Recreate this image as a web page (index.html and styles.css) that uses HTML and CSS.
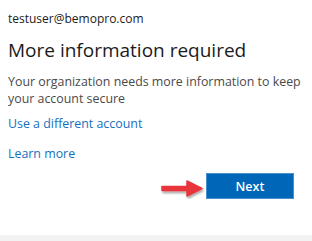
FILE: index.html
```html
<!DOCTYPE html>
<html lang="en">
<head>
   <meta charset="UTF-8">
   <title>More information required</title>
   <link rel="stylesheet" href="styles.css">
</head>
<body>
   <div class="signin-box">
       <div class="identity">testuser@bemopro.com</div>
       <h1 class="title">More information required</h1>
       <p class="description">Your organization needs more information to keep your account secure</p>
       <a class="link link-account" href="#">Use a different account</a>
       <a class="link link-learn" href="#">Learn more</a>

       <div class="actions">
           <svg class="arrow" width="46" height="20" viewBox="0 0 46 20">
               <defs>
                   <filter id="shadow" x="-20%" y="-40%" width="140%" height="180%">
                       <feDropShadow dx="1" dy="2" stdDeviation="1" flood-color="#000" flood-opacity="0.35"/>
                   </filter>
               </defs>
               <g filter="url(#shadow)">
                   <path d="M3 7.5 H28 V2 L43 9.5 L28 17 V11.5 H3 Z" fill="#e8363b" stroke="#e8363b" stroke-linejoin="round" stroke-width="1.5"/>
               </g>
           </svg>
           <button class="next-button" type="button">Next</button>
       </div>
   </div>
   <div class="footer-band"></div>
</body>
</html>
```

FILE: styles.css
```css
:root {
    --text: #1b1b1b;
    --muted: #4a4a4a;
    --link: #1570c0;
    --button: #0067b8;
    --band: #f2f2f2;
}

* {
    margin: 0;
    padding: 0;
    box-sizing: border-box;
}

body {
    width: 312px;
    height: 241px;
    background: #ffffff;
    font-family: 'Open Sans', sans-serif;
    color: var(--text);
    overflow: hidden;
}

.signin-box {
    height: 235px;
    padding: 10px 8px 0;
    display: flex;
    flex-direction: column;
    align-items: flex-start;
}

.identity {
    font-size: 12px;
    line-height: 17px;
}

.title {
    font-size: 19px;
    font-weight: 400;
    line-height: 26px;
    margin-top: 10px;
}

.description {
    font-size: 12.4px;
    line-height: 17px;
    color: var(--muted);
    margin-top: 10px;
}

.link {
    font-size: 12.4px;
    line-height: 17px;
    color: var(--link);
    text-decoration: none;
}

.link-account {
    margin-top: 8px;
}

.link-learn {
    margin-top: 13px;
}

.actions {
    align-self: stretch;
    display: flex;
    justify-content: flex-end;
    align-items: center;
    margin-top: 11px;
    padding-right: 10px;
}

.arrow {
    margin-right: 1px;
    margin-top: 5px;
}

.next-button {
    width: 88px;
    height: 26px;
    background: var(--button);
    color: #ffffff;
    border: 1px solid #4a90d0;
    font-family: 'Open Sans', sans-serif;
    font-size: 12.5px;
    font-weight: 600;
    cursor: pointer;
}

.footer-band {
    height: 6px;
    background: var(--band);
}
```
